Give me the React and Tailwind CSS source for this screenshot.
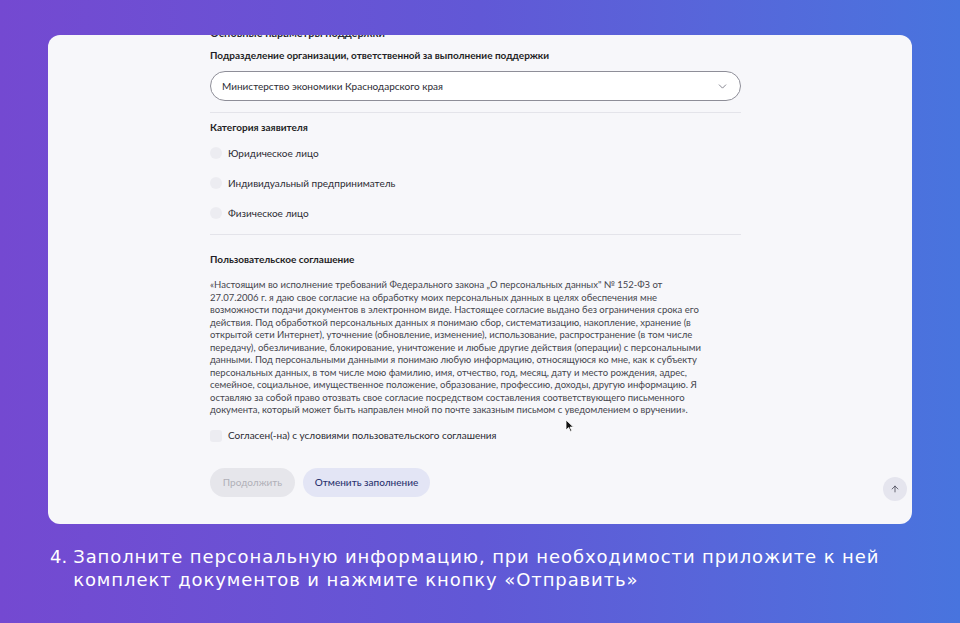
import { ChevronDown, ArrowUp } from 'lucide-react';

const agreementLines = [
  '«Настоящим во исполнение требований Федерального закона „О персональных данных" № 152-ФЗ от',
  '27.07.2006 г. я даю свое согласие на обработку моих персональных данных в целях обеспечения мне',
  'возможности подачи документов в электронном виде. Настоящее согласие выдано без ограничения срока его',
  'действия. Под обработкой персональных данных я понимаю сбор, систематизацию, накопление, хранение (в',
  'открытой сети Интернет), уточнение (обновление, изменение), использование, распространение (в том числе',
  'передачу), обезличивание, блокирование, уничтожение и любые другие действия (операции) с персональными',
  'данными. Под персональными данными я понимаю любую информацию, относящуюся ко мне, как к субъекту',
  'персональных данных, в том числе мою фамилию, имя, отчество, год, месяц, дату и место рождения, адрес,',
  'семейное, социальное, имущественное положение, образование, профессию, доходы, другую информацию. Я',
  'оставляю за собой право отозвать свое согласие посредством составления соответствующего письменного',
  'документа, который может быть направлен мной по почте заказным письмом с уведомлением о вручении».',
];

const applicantTypes = ['Юридическое лицо', 'Индивидуальный предприниматель', 'Физическое лицо'];

function Radio({ label }) {
  return (
    <div className="flex h-[20px] items-center gap-[6px]">
      <span className="h-[12px] w-[12px] rounded-full bg-[#ececf1]"></span>
      <span className="text-[10px] text-[#2b2b33]">{label}</span>
    </div>
  );
}

export default function App() {
  return (
    <div className="relative flex h-[623px] w-[960px] flex-col overflow-hidden bg-gradient-to-r from-[#7449d1] via-[#6158d6] to-[#4874de]">
      {/* form card */}
      <div
        className="relative ml-[48px] mt-[35px] h-[489px] w-[864px] overflow-hidden rounded-[12px] bg-[#f7f7fa]"
        style={{ fontFamily: 'Lato, "Open Sans", sans-serif' }}
      >
        <div className="ml-[162px] -mt-[9px] flex w-[531px] flex-col">
          <div className="text-[11px] font-bold leading-[14px] text-[#2b2b33]">Основные параметры поддержки</div>
          <div className="mt-[8px] text-[10px] font-bold leading-[14px] text-[#1f1f26]">
            Подразделение организации, ответственной за выполнение поддержки
          </div>
          <div className="mt-[9px] flex h-[30px] items-center justify-between rounded-full border border-[#8e8e98] bg-white pl-[11px] pr-[11px]">
            <span className="text-[10px] text-[#2b2b33]">Министерство экономики Краснодарского края</span>
            <ChevronDown size={13} strokeWidth={1.5} className="text-[#6b6b78]" />
          </div>
          <div className="mt-[11px] h-px bg-[#e4e4ea]"></div>

          <div className="mt-[7px] text-[10px] font-bold leading-[14px] text-[#1f1f26]">Категория заявителя</div>
          <div className="mt-[9px] flex flex-col gap-[10px]">
            {applicantTypes.map((t) => (
              <Radio key={t} label={t} />
            ))}
          </div>
          <div className="mt-[11px] h-px bg-[#e4e4ea]"></div>

          <div className="mt-[17px] text-[10px] font-bold leading-[14px] text-[#1f1f26]">Пользовательское соглашение</div>
          <div className="mt-[13px] text-[9.5px] leading-[12.5px] text-[#45454d]">
            {agreementLines.map((line, i) => (
              <div key={i} className="whitespace-nowrap">{line}</div>
            ))}
          </div>
          <div className="mt-[9px] flex h-[20px] items-center gap-[6px]">
            <span className="h-[12px] w-[12px] rounded-[3px] bg-[#ececf1]"></span>
            <span className="text-[10px] text-[#2b2b33]">Согласен(-на) с условиями пользовательского соглашения</span>
          </div>

          <div className="mt-[22px] flex gap-[8px]">
            <button className="h-[29px] w-[85px] rounded-full bg-[#e6e6eb] text-[10px] text-[#b0b0b8]">Продолжить</button>
            <button className="h-[29px] w-[127px] rounded-full bg-[#e3e5f5] text-[10px] font-medium text-[#2c3470]">
              Отменить заполнение
            </button>
          </div>
        </div>

        {/* scroll to top */}
        <div className="absolute left-[835px] top-[442px] flex h-[24px] w-[24px] items-center justify-center rounded-full bg-[#e5e5ee]">
          <ArrowUp size={10} strokeWidth={1.8} className="text-[#3a3a48]" />
        </div>

        {/* mouse pointer */}
        <svg className="absolute left-[517px] top-[384px]" width="9" height="13" viewBox="0 0 9 13">
          <path d="M1 1 L1 11 L3.6 8.6 L5.4 12.4 L6.8 11.8 L5 8.1 L8.4 8.1 Z" fill="#111" stroke="#fff" strokeWidth="0.8" />
        </svg>
      </div>

      {/* caption */}
      <div
        className="ml-[50px] mt-[21px] flex gap-[6px] text-[18px] leading-[23px] tracking-[0.9px] text-white"
        style={{ fontFamily: '"DejaVu Sans", "Open Sans", sans-serif' }}
      >
        <span className="tracking-normal">4.</span>
        <p>
          Заполните персональную информацию, при необходимости приложите к ней
          <br />
          комплект документов и нажмите кнопку «Отправить»
        </p>
      </div>
    </div>
  );
}
